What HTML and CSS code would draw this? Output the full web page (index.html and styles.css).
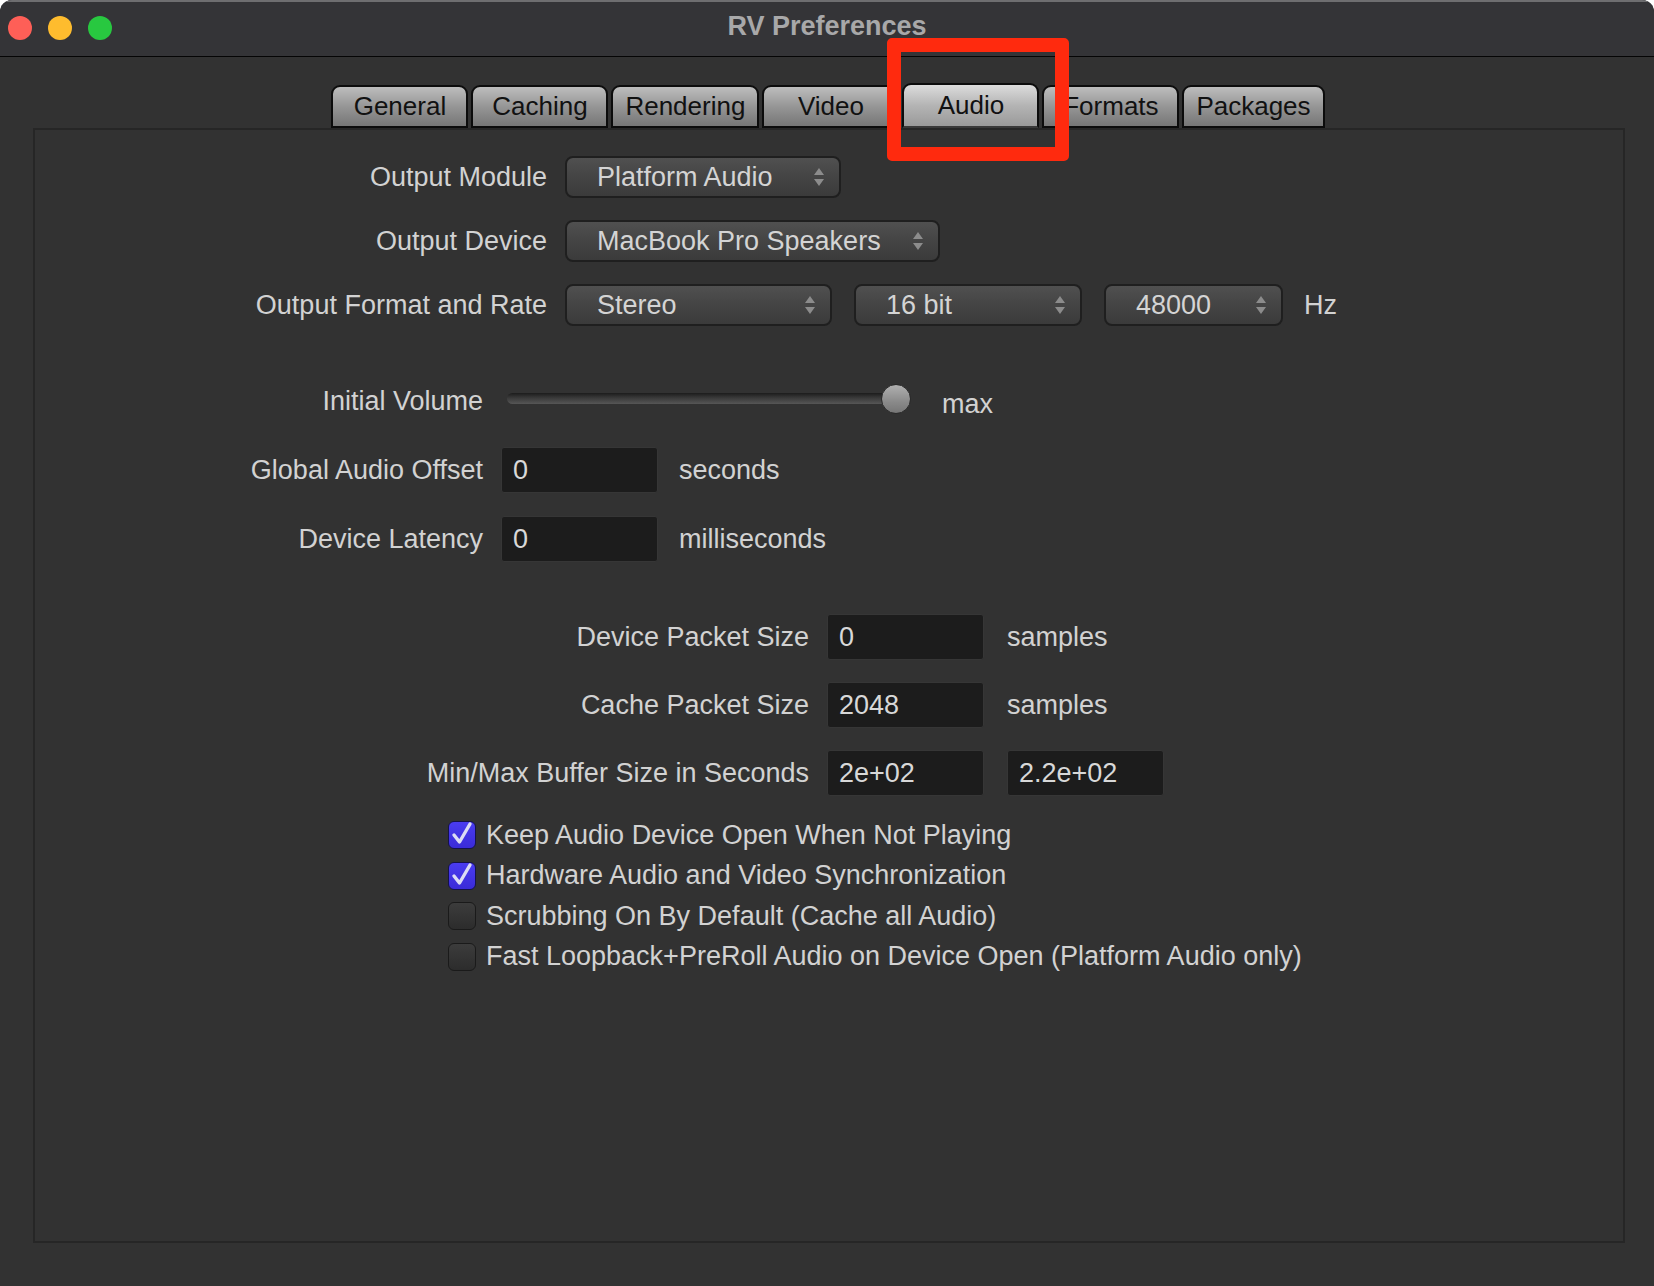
FILE: index.html
```html
<!DOCTYPE html>
<html lang="en">
<head>
    <meta charset="UTF-8">
    <meta name="viewport" content="width=device-width, initial-scale=1.0">
    <title>RV Preferences</title>
    <link rel="stylesheet" href="styles.css">
</head>
<body>
    <div class="window">
        <div class="titlebar">
            <div class="lights">
                <span class="light red"></span>
                <span class="light yellow"></span>
                <span class="light green"></span>
            </div>
            <div class="title">RV Preferences</div>
            <div></div>
        </div>

        <div class="content">
            <div class="tabs">
                <button class="tab">General</button>
                <button class="tab">Caching</button>
                <button class="tab">Rendering</button>
                <button class="tab">Video</button>
                <button class="tab active">Audio</button>
                <button class="tab">Formats</button>
                <button class="tab">Packages</button>
            </div>

            <div class="pane">
                <!-- output device settings -->
                <div class="form output">
                    <div class="label">Output Module</div>
                    <div class="field">
                        <div class="combo module">Platform Audio
                            <svg class="arrows" width="12" height="20" viewBox="0 0 12 20"><path d="M1 8 L6 1 L11 8 Z M1 12 L6 19 L11 12 Z"/></svg>
                        </div>
                    </div>

                    <div class="label">Output Device</div>
                    <div class="field">
                        <div class="combo device">MacBook Pro Speakers
                            <svg class="arrows" width="12" height="20" viewBox="0 0 12 20"><path d="M1 8 L6 1 L11 8 Z M1 12 L6 19 L11 12 Z"/></svg>
                        </div>
                    </div>

                    <div class="label">Output Format and Rate</div>
                    <div class="field">
                        <div class="combo stereo">Stereo
                            <svg class="arrows" width="12" height="20" viewBox="0 0 12 20"><path d="M1 8 L6 1 L11 8 Z M1 12 L6 19 L11 12 Z"/></svg>
                        </div>
                        <div class="combo bits">16 bit
                            <svg class="arrows" width="12" height="20" viewBox="0 0 12 20"><path d="M1 8 L6 1 L11 8 Z M1 12 L6 19 L11 12 Z"/></svg>
                        </div>
                        <div class="combo rate">48000
                            <svg class="arrows" width="12" height="20" viewBox="0 0 12 20"><path d="M1 8 L6 1 L11 8 Z M1 12 L6 19 L11 12 Z"/></svg>
                        </div>
                        <span class="unit hz">Hz</span>
                    </div>
                </div>

                <!-- volume and offsets -->
                <div class="form volume">
                    <div class="label">Initial Volume</div>
                    <div class="field">
                        <div class="slider">
                            <div class="track"></div>
                            <div class="knob"></div>
                        </div>
                        <span class="unit max">max</span>
                    </div>

                    <div class="label">Global Audio Offset</div>
                    <div class="field">
                        <div class="input">0</div>
                        <span class="unit">seconds</span>
                    </div>

                    <div class="label">Device Latency</div>
                    <div class="field">
                        <div class="input">0</div>
                        <span class="unit">milliseconds</span>
                    </div>
                </div>

                <!-- buffers -->
                <div class="form buffers">
                    <div class="label">Device Packet Size</div>
                    <div class="input">0</div>
                    <span class="unit">samples</span>

                    <div class="label">Cache Packet Size</div>
                    <div class="input">2048</div>
                    <span class="unit">samples</span>

                    <div class="label">Min/Max Buffer Size in Seconds</div>
                    <div class="input">2e+02</div>
                    <div class="input">2.2e+02</div>
                </div>

                <div class="checks">
                    <div class="check-row">
                        <span class="box checked">
                            <svg width="28" height="28" viewBox="0 0 28 28"><path d="M6 14 L11.5 21 L22 3"/></svg>
                        </span>
                        Keep Audio Device Open When Not Playing
                    </div>
                    <div class="check-row">
                        <span class="box checked">
                            <svg width="28" height="28" viewBox="0 0 28 28"><path d="M6 14 L11.5 21 L22 3"/></svg>
                        </span>
                        Hardware Audio and Video Synchronization
                    </div>
                    <div class="check-row">
                        <span class="box"></span>
                        Scrubbing On By Default (Cache all Audio)
                    </div>
                    <div class="check-row">
                        <span class="box"></span>
                        Fast Loopback+PreRoll Audio on Device Open (Platform Audio only)
                    </div>
                </div>
            </div>
        </div>

        <div class="highlight"></div>
    </div>
</body>
</html>
```

FILE: styles.css
```css
* {
  margin: 0;
  padding: 0;
  box-sizing: border-box;
}

body {
  font-family: "Liberation Sans", Arial, sans-serif;
  background-color: #ffffff;
  width: 1654px;
  height: 1286px;
  overflow: hidden;
}

/* Window frame */
.window {
  position: relative;
  width: 1654px;
  height: 1286px;
  display: flex;
  flex-direction: column;
  background-color: #323232;
  border-radius: 12px 12px 0 0;
  overflow: hidden;
}

.titlebar {
  display: grid;
  grid-template-columns: 1fr auto 1fr;
  align-items: center;
  height: 57px;
  background-color: #343437;
  border-bottom: 1px solid #050505;
  box-shadow: inset 0 2px 0 #6e6e70;
}

.lights {
  display: flex;
  gap: 16px;
  padding-left: 8px;
}

.light {
  width: 24px;
  height: 24px;
  border-radius: 50%;
}

.red { background-color: #fe5f57; }
.yellow { background-color: #febc2e; }
.green { background-color: #28c840; }

.title {
  font-size: 27px;
  font-weight: bold;
  color: #a8a8a9;
  padding-bottom: 4px;
}

/* Tabs */
.content {
  flex: 1;
  display: flex;
  flex-direction: column;
  padding: 26px 29px 43px 33px;
}

.tabs {
  display: flex;
  justify-content: center;
  align-items: flex-end;
  gap: 3px;
  padding-right: 2px;
}

.tab {
  min-width: 137px;
  height: 43px;
  padding: 0 12px;
  font-family: "Liberation Sans", Arial, sans-serif;
  font-size: 26px;
  color: #111111;
  border: 2px solid #0c0c0c;
  border-radius: 9px 9px 0 0;
  background: linear-gradient(#bdbdbd, #969696 50%, #767676);
}

.tab.active {
  height: 45px;
  background: linear-gradient(#dcdcdc, #b4b4b4 50%, #9a9a9a);
  border-bottom-color: #3a3a3a;
}

/* Main pane */
.pane {
  flex: 1;
  border: 2px solid #262626;
  color: #d2d2d2;
  font-size: 27px;
}

.form {
  display: grid;
  align-items: center;
  column-gap: 18px;
}

.label {
  text-align: right;
  white-space: nowrap;
}

.field {
  display: flex;
  align-items: center;
}

.output {
  grid-template-columns: 512px auto;
  grid-auto-rows: 42px;
  row-gap: 22px;
  padding-top: 26px;
}

.output .field {
  gap: 22px;
}

.combo {
  display: flex;
  align-items: center;
  justify-content: space-between;
  height: 42px;
  padding: 0 14px 0 30px;
  color: #d4d4d4;
  border: 2px solid #1f1f1f;
  border-radius: 8px;
  background: linear-gradient(#505050, #444444 50%, #3b3b3b);
}

.combo.module { width: 276px; }
.combo.device { width: 375px; }
.combo.stereo { width: 267px; }
.combo.bits { width: 228px; }
.combo.rate { width: 179px; }

.arrows {
  fill: #8c8c8c;
}

.hz {
  margin-left: -1px;
}

/* Volume and offsets */
.volume {
  grid-template-columns: 448px auto;
  grid-auto-rows: 46px;
  row-gap: 23px;
  margin-top: 52px;
}

.slider {
  position: relative;
  width: 411px;
  height: 30px;
  margin-top: -4px;
}

.track {
  position: absolute;
  left: 6px;
  top: 9px;
  width: 390px;
  height: 11px;
  border-radius: 6px;
  background: linear-gradient(#1c1c1c, #3a3a3a 45%, #565656);
}

.knob {
  position: absolute;
  left: 380px;
  top: 0;
  width: 30px;
  height: 30px;
  border-radius: 50%;
  border: 1px solid #2a2a2a;
  background: linear-gradient(#b0b0b0, #8a8a8a 60%, #767676);
}

.input {
  width: 157px;
  height: 46px;
  display: flex;
  align-items: center;
  padding-left: 11px;
  color: #d8d8d8;
  background-color: #1c1c1c;
  border: 1px solid #363636;
  border-radius: 3px;
}

.volume .unit {
  margin-left: 21px;
}

.volume .max {
  margin-left: 30px;
  padding-top: 6px;
}

/* Buffer sizes */
.buffers {
  grid-template-columns: 774px 162px auto;
  grid-auto-rows: 46px;
  row-gap: 22px;
  margin-top: 52px;
}

/* Checkboxes */
.checks {
  margin-top: 19px;
  padding-left: 413px;
}

.check-row {
  display: flex;
  align-items: center;
  gap: 10px;
  height: 40.5px;
  white-space: nowrap;
}

.box {
  width: 28px;
  height: 28px;
  border-radius: 6px;
  border: 1px solid #1a1a1a;
  background: linear-gradient(#3c3c3c, #2c2c2c);
}

.box.checked {
  border-color: #15124a;
  background: linear-gradient(#4a3cf0, #3a2bd8);
}

.box svg {
  display: block;
  margin: -1px;
  fill: none;
  stroke: #dcdcf4;
  stroke-width: 3.4;
  stroke-linecap: round;
  stroke-linejoin: round;
}

/* Red annotation box */
.highlight {
  position: absolute;
  left: 887px;
  top: 38px;
  width: 182px;
  height: 123px;
  border: 14px solid #ff2a0e;
  border-radius: 5px;
}
```
